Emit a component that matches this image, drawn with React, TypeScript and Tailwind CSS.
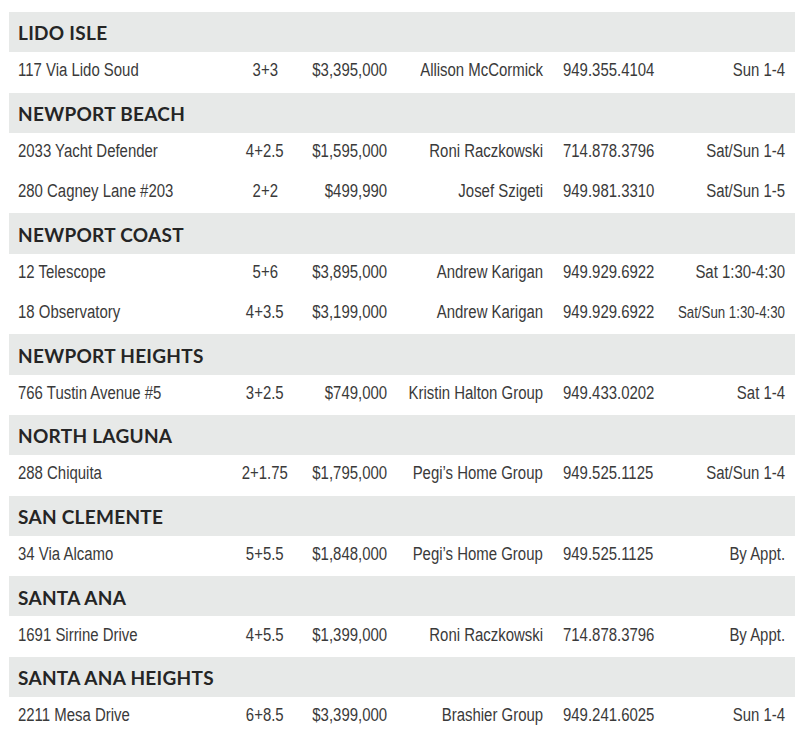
import React from 'react';

type Listing = {
  address: string;
  beds: string;
  price: string;
  agent: string;
  phone: string;
  hours: string;
  small?: boolean;
};

type Area = { name: string; listings: Listing[] };

const AREAS: Area[] = [
  {
    name: 'Lido Isle',
    listings: [
      { address: '117 Via Lido Soud', beds: '3+3', price: '$3,395,000', agent: 'Allison McCormick', phone: '949.355.4104', hours: 'Sun 1-4' },
    ],
  },
  {
    name: 'Newport Beach',
    listings: [
      { address: '2033 Yacht Defender', beds: '4+2.5', price: '$1,595,000', agent: 'Roni Raczkowski', phone: '714.878.3796', hours: 'Sat/Sun 1-4' },
      { address: '280 Cagney Lane #203', beds: '2+2', price: '$499,990', agent: 'Josef Szigeti', phone: '949.981.3310', hours: 'Sat/Sun 1-5' },
    ],
  },
  {
    name: 'Newport Coast',
    listings: [
      { address: '12 Telescope', beds: '5+6', price: '$3,895,000', agent: 'Andrew Karigan', phone: '949.929.6922', hours: 'Sat 1:30-4:30' },
      { address: '18 Observatory', beds: '4+3.5', price: '$3,199,000', agent: 'Andrew Karigan', phone: '949.929.6922', hours: 'Sat/Sun 1:30-4:30', small: true },
    ],
  },
  {
    name: 'Newport Heights',
    listings: [
      { address: '766 Tustin Avenue #5', beds: '3+2.5', price: '$749,000', agent: 'Kristin Halton Group', phone: '949.433.0202', hours: 'Sat 1-4' },
    ],
  },
  {
    name: 'North Laguna',
    listings: [
      { address: '288 Chiquita', beds: '2+1.75', price: '$1,795,000', agent: 'Pegi\u2019s Home Group', phone: '949.525.1125', hours: 'Sat/Sun 1-4' },
    ],
  },
  {
    name: 'San Clemente',
    listings: [
      { address: '34 Via Alcamo', beds: '5+5.5', price: '$1,848,000', agent: 'Pegi\u2019s Home Group', phone: '949.525.1125', hours: 'By Appt.' },
    ],
  },
  {
    name: 'Santa Ana',
    listings: [
      { address: '1691 Sirrine Drive', beds: '4+5.5', price: '$1,399,000', agent: 'Roni Raczkowski', phone: '714.878.3796', hours: 'By Appt.' },
    ],
  },
  {
    name: 'Santa Ana Heights',
    listings: [
      { address: '2211 Mesa Drive', beds: '6+8.5', price: '$3,399,000', agent: 'Brashier Group', phone: '949.241.6025', hours: 'Sun 1-4' },
    ],
  },
];

// condensed face: Arial metrics squeezed to Arial Narrow proportions
const narrow = 'inline-block whitespace-nowrap scale-x-[0.83]';

const App: React.FC = () => {
  return (
    <div className="min-h-screen bg-white pt-[12px] pb-[16px]">
      <div className="ml-[9px] w-[786px]">
        {AREAS.map((area) => (
          <div key={area.name}>
            <div className="h-[40.3px] bg-[#e7e9e8] pl-[9px] pt-[3px] flex items-center">
              <h3 className="uppercase font-bold text-[19px] tracking-[0.015em] text-[#252525] font-['Lato',sans-serif]">
                {area.name}
              </h3>
            </div>
            {area.listings.map((l) => (
              <div
                key={l.address}
                className="h-[40.3px] grid grid-cols-[217px_60px_92px_156px_126px_116px] items-center pl-[9px] pr-[10px] pb-[3px] text-[18px] text-[#3a3a3a] font-['Liberation_Sans',Arial,sans-serif]"
              >
                <div className="flex justify-start">
                  <span className={`${narrow} origin-left`}>{l.address}</span>
                </div>
                <div className="flex justify-center">
                  <span className={`${narrow} origin-center`}>{l.beds}</span>
                </div>
                <div className="flex justify-end">
                  <span className={`${narrow} origin-right`}>{l.price}</span>
                </div>
                <div className="flex justify-end">
                  <span className={`${narrow} origin-right`}>{l.agent}</span>
                </div>
                <div className="flex justify-start pl-[20px]">
                  <span className={`${narrow} origin-left`}>{l.phone}</span>
                </div>
                <div className="flex justify-end">
                  <span className={`${narrow} origin-right ${l.small ? 'text-[16px]' : ''}`}>{l.hours}</span>
                </div>
              </div>
            ))}
          </div>
        ))}
      </div>
    </div>
  );
};

export default App;
